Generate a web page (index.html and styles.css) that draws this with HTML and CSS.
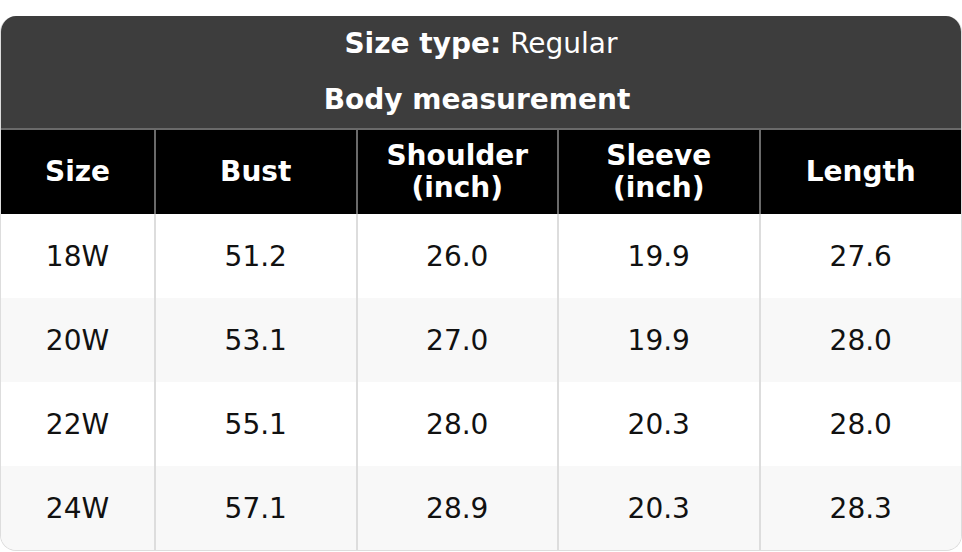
FILE: index.html
```html
<!DOCTYPE html>
<html>
<head>
<meta charset="utf-8">
<link rel="stylesheet" href="styles.css">
</head>
<body>
<div class="chart">
  <div class="caption">
    <div class="cap-line"><b>Size type:</b> Regular</div>
    <div class="cap-line cap-sub"><b>Body measurement</b></div>
  </div>
  <table class="sizes">
    <colgroup>
      <col class="c-size"><col><col><col><col>
    </colgroup>
    <thead>
      <tr><th>Size</th><th>Bust</th><th>Shoulder<br>(inch)</th><th>Sleeve<br>(inch)</th><th>Length</th></tr>
    </thead>
    <tbody>
      <tr><td>18W</td><td>51.2</td><td>26.0</td><td>19.9</td><td>27.6</td></tr>
      <tr><td>20W</td><td>53.1</td><td>27.0</td><td>19.9</td><td>28.0</td></tr>
      <tr><td>22W</td><td>55.1</td><td>28.0</td><td>20.3</td><td>28.0</td></tr>
      <tr><td>24W</td><td>57.1</td><td>28.9</td><td>20.3</td><td>28.3</td></tr>
    </tbody>
  </table>
</div>
</body>
</html>
```
FILE: styles.css
```css
html, body {
  margin: 0;
  padding: 0;
  background: #fff;
}
body {
  font-family: "DejaVu Sans", sans-serif;
  padding-top: 16px;
}
.chart {
  width: 962px;
  box-sizing: border-box;
  border: 1px solid #ddd;
  border-top: none;
  border-radius: 16px;
  overflow: hidden;
}
.caption {
  background: #3d3d3d;
  color: #fff;
  font-size: 28px;
  text-align: center;
  height: 112px;
  display: flex;
  flex-direction: column;
}
.cap-line {
  flex: 1;
  display: flex;
  align-items: center;
  justify-content: center;
  gap: 9px;
  padding-bottom: 2px;
}
.cap-sub {
  padding-right: 8px;
}
.sizes {
  width: 100%;
  border-collapse: collapse;
  table-layout: fixed;
  font-size: 28px;
}
.c-size { width: 154px; }
.sizes th {
  background: #000;
  color: #fff;
  font-weight: bold;
  line-height: 32px;
  height: 85px;
  box-sizing: border-box;
  padding: 0;
  border-top: 2px solid #6a6a6a;
  border-left: 2px solid #6a6a6a;
}
.sizes td {
  height: 84px;
  padding: 0;
  text-align: center;
  color: #111;
  border-left: 2px solid #ddd;
}
.sizes th:first-child, .sizes td:first-child { border-left: none; }
.sizes tbody tr:nth-child(even) td { background: #f8f8f8; }
```
